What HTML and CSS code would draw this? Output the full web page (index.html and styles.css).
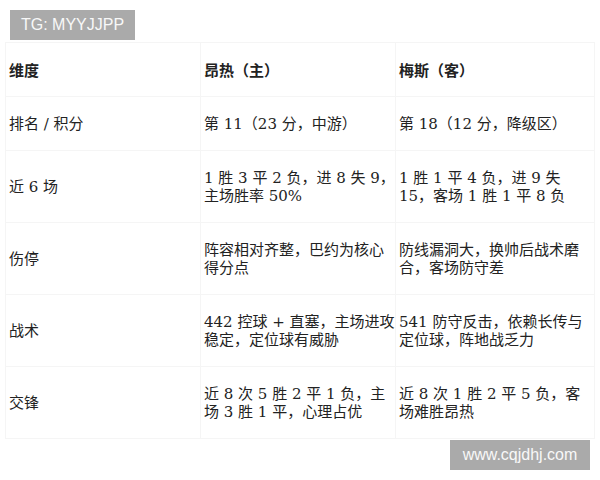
FILE: index.html
```html
<!DOCTYPE html>
<html lang="zh">
<head>
<meta charset="utf-8">
<link rel="stylesheet" href="styles.css">
</head>
<body>
<div class="page">
  <table class="grid">
    <colgroup><col class="c1"><col class="c2"><col class="c3"></colgroup>
    <thead>
      <tr><th>维度</th><th class="mid">昂热（主）</th><th>梅斯（客）</th></tr>
    </thead>
    <tbody>
      <tr><td>排名 / 积分</td><td class="mid">第 11（23 分，中游）</td><td>第 18（12 分，降级区）</td></tr>
      <tr><td>近 6 场</td><td class="mid">1 胜 3 平 2 负，进 8 失 9，主场胜率 50%</td><td>1 胜 1 平 4 负，进 9 失 15，客场 1 胜 1 平 8 负</td></tr>
      <tr><td>伤停</td><td class="mid">阵容相对齐整，巴约为核心得分点</td><td>防线漏洞大，换帅后战术磨合，客场防守差</td></tr>
      <tr><td>战术</td><td class="mid">442 控球 + 直塞，主场进攻稳定，定位球有威胁</td><td>541 防守反击，依赖长传与定位球，阵地战乏力</td></tr>
      <tr><td>交锋</td><td class="mid">近 8 次 5 胜 2 平 1 负，主场 3 胜 1 平，心理占优</td><td>近 8 次 1 胜 2 平 5 负，客场难胜昂热</td></tr>
    </tbody>
  </table>
  <div class="mark mark-top">TG: MYYJJPP</div>
  <div class="mark mark-bottom">www.cqjdhj.com</div>
</div>
</body>
</html>
```

FILE: styles.css
```css
html, body {
  margin: 0;
  padding: 0;
  background: #ffffff;
}
.page {
  position: relative;
  width: 600px;
  height: 480px;
  padding: 42px 0 0 5px;
  box-sizing: border-box;
}
.grid {
  width: 589px;
  border-collapse: collapse;
  table-layout: fixed;
  font-family: "DejaVu Serif", "Noto Sans CJK SC", serif;
  font-size: 15px;
  color: #222;
}
.c1 { width: 195px; }
.c2 { width: 195px; }
.c3 { width: 199px; }
.grid th, .grid td {
  border: 1px solid #f5f5f5;
  padding: 18px 4px 17px 3px;
  line-height: 18px;
  text-align: left;
  vertical-align: middle;
}
.grid .mid {
  padding-right: 0;
}
.grid th {
  font-weight: bold;
  font-family: "Noto Sans CJK SC", sans-serif;
}
.mark {
  position: absolute;
  background: #aaaaaa;
  color: #f8f8f8;
  font-family: "Liberation Sans", Arial, sans-serif;
  font-size: 16px;
  line-height: 30px;
  height: 30px;
  text-align: center;
}
.mark-top {
  left: 10px;
  top: 10px;
  width: 125px;
}
.mark-bottom {
  left: 450px;
  top: 440px;
  width: 140px;
}
```
